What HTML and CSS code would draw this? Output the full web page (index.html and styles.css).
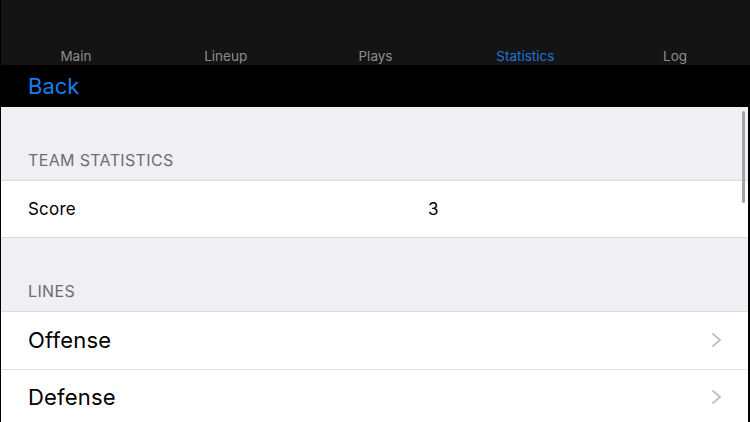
FILE: index.html
```html
<!DOCTYPE html>
<html lang="en">

<head>
  <meta charset="UTF-8">
  <meta name="viewport" content="width=device-width, initial-scale=1.0">
  <title>Statistics</title>
  <link rel="stylesheet" href="styles.css">
</head>

<body>
  <div class="tabs">
    <div class="tab">Main</div>
    <div class="tab">Lineup</div>
    <div class="tab">Plays</div>
    <div class="tab active">Statistics</div>
    <div class="tab">Log</div>
  </div>
  <div class="navbar">
    <a class="back" href="#">Back</a>
  </div>
  <div class="content">
    <div class="scrollbar"></div>
    <div class="section-header">Team Statistics</div>
    <div class="group">
      <div class="row small">
        <span class="label">Score</span>
        <span class="value">3</span>
      </div>
    </div>
    <div class="section-header">Lines</div>
    <div class="group">
      <div class="row">
        <span class="label">Offense</span>
        <svg class="chevron" viewBox="0 0 11 16"><path d="M1.5 1.5 L9 8 L1.5 14.5" /></svg>
      </div>
      <div class="row">
        <span class="label">Defense</span>
        <svg class="chevron" viewBox="0 0 11 16"><path d="M1.5 1.5 L9 8 L1.5 14.5" /></svg>
      </div>
    </div>
  </div>
</body>

</html>
```

FILE: styles.css
```css
body {
  margin: 0;
  background-color: #000;
  font-family: Inter, "Liberation Sans", Arial, sans-serif;
  height: 422px;
  overflow: hidden;
}

.tabs {
  height: 65px;
  background-color: #141414;
  border-left: 1px solid #000;
  display: grid;
  grid-template-columns: repeat(5, 1fr);
  align-items: end;
  padding-bottom: 1px;
  box-sizing: border-box;
}

.tab {
  text-align: center;
  font-size: 13.5px;
  line-height: 16px;
  color: #8d8d8d;
}

.tab.active {
  color: #1e74d6;
}

.navbar {
  height: 42px;
  display: flex;
  align-items: center;
  padding-left: 28px;
}

.back {
  color: #1b7bf0;
  font-size: 22px;
  text-decoration: none;
  padding-bottom: 1px;
}

.content {
  position: relative;
  margin: 0 2px 0 1px;
  background-color: #efeff4;
  height: 315px;
}

.scrollbar {
  position: absolute;
  top: 4px;
  right: 3px;
  width: 3px;
  height: 92px;
  border-radius: 2px;
  background-color: #a3a3a7;
}

.section-header {
  height: 73px;
  box-sizing: border-box;
  padding: 0 27px 10px;
  display: flex;
  align-items: flex-end;
  text-transform: uppercase;
  font-size: 16px;
  letter-spacing: 0.35px;
  color: #6d6d72;
}

.group {
  background-color: #fff;
  border-top: 1px solid #dcdce0;
  border-bottom: 1px solid #dcdce0;
}

.row {
  height: 57px;
  box-sizing: border-box;
  display: flex;
  align-items: center;
  padding: 0 26px 2px 27px;
  position: relative;
  font-size: 22px;
  color: #000;
}

.row + .row {
  border-top: 1px solid #e2e2e6;
  height: 57px;
}

.row.small {
  font-size: 17px;
  height: 56px;
  padding-bottom: 0;
}

.label {
  flex: 1;
  letter-spacing: 0.2px;
}

.value {
  position: absolute;
  left: 427px;
}

.chevron {
  width: 11px;
  height: 16px;
  fill: none;
  stroke: #c0c0c5;
  stroke-width: 2;
}
```
